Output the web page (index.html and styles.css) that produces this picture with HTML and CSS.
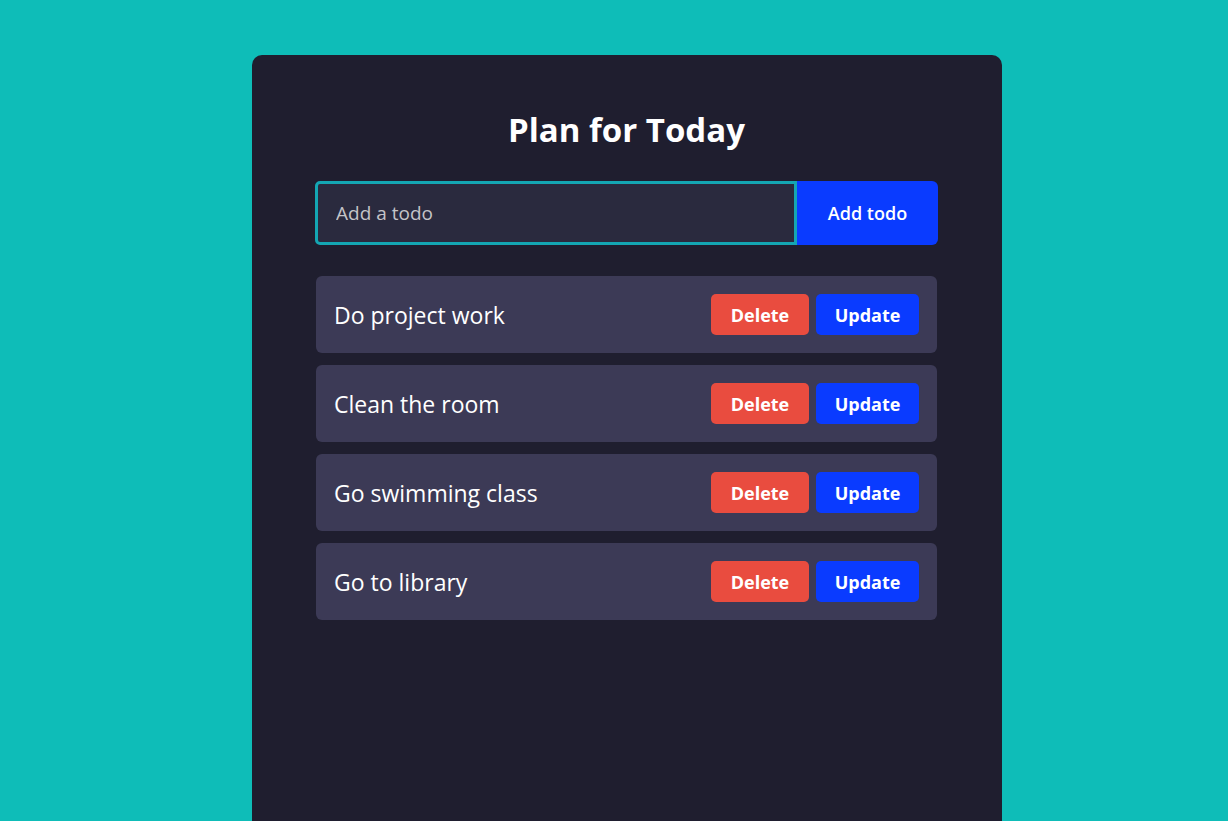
FILE: index.html
```html
<!DOCTYPE html>
<html lang="en">
<head>
<meta charset="utf-8">
<title>Plan for Today</title>
<link rel="stylesheet" href="styles.css">
</head>
<body>
<main class="page">
  <section class="card">
    <h1 class="title">Plan for Today</h1>
    <form class="todo-form">
      <input class="todo-input" type="text" placeholder="Add a todo">
      <button class="add-btn" type="button">Add todo</button>
    </form>
    <ul class="todo-list">
      <li class="todo-item">
        <span class="todo-text">Do project work</span>
        <div class="actions">
          <button class="btn btn-delete" type="button">Delete</button>
          <button class="btn btn-update" type="button">Update</button>
        </div>
      </li>
      <li class="todo-item">
        <span class="todo-text">Clean the room</span>
        <div class="actions">
          <button class="btn btn-delete" type="button">Delete</button>
          <button class="btn btn-update" type="button">Update</button>
        </div>
      </li>
      <li class="todo-item">
        <span class="todo-text">Go swimming class</span>
        <div class="actions">
          <button class="btn btn-delete" type="button">Delete</button>
          <button class="btn btn-update" type="button">Update</button>
        </div>
      </li>
      <li class="todo-item">
        <span class="todo-text">Go to library</span>
        <div class="actions">
          <button class="btn btn-delete" type="button">Delete</button>
          <button class="btn btn-update" type="button">Update</button>
        </div>
      </li>
    </ul>
  </section>
</main>
</body>
</html>
```
FILE: styles.css
```css
* { box-sizing: border-box; }
html, body { height: 100%; }
body {
  margin: 0;
  background: #0ebdb8;
  font-family: "Open Sans", "DejaVu Sans", sans-serif;
  overflow: hidden;
}
.page {
  display: flex;
  justify-content: center;
  padding-top: 55px;
  padding-left: 26px;
}
.card {
  width: 750px;
  min-height: 900px;
  background: #1f1e2f;
  border-radius: 10px;
  padding: 49px 64px 40px 63px;
}
.title {
  margin: 0 0 25px;
  text-align: center;
  color: #ffffff;
  font-size: 33px;
  font-weight: 700;
  line-height: 52px;
}
.todo-form {
  display: flex;
  height: 64px;
  margin: 0 0 31px;
}
.todo-input {
  flex: 1;
  min-width: 0;
  height: 64px;
  background: #2a2a3e;
  border: 3px solid #14a6b3;
  border-radius: 5px 0 0 5px;
  padding: 0 18px;
  font-family: inherit;
  font-size: 19px;
  color: #ffffff;
  outline: none;
}
.todo-input::placeholder { color: #c4c4c8; }
.add-btn {
  width: 141px;
  height: 64px;
  border: none;
  background: #0a3bff;
  color: #ffffff;
  border-radius: 0 6px 6px 0;
  font-family: inherit;
  font-size: 18px;
  font-weight: 600;
}
.todo-list {
  list-style: none;
  margin: 0;
  padding: 0;
  display: flex;
  flex-direction: column;
  gap: 12px;
}
.todo-item {
  display: flex;
  align-items: center;
  justify-content: space-between;
  height: 77px;
  padding: 0 18px;
  background: #3c3a56;
  border-radius: 6px;
  margin-right: 1px;
  margin-left: 1px;
}
.todo-text {
  color: #ffffff;
  font-size: 23px;
}
.actions {
  display: flex;
  gap: 7px;
}
.btn {
  height: 41px;
  border: none;
  border-radius: 5px;
  color: #ffffff;
  font-family: inherit;
  font-size: 18px;
  font-weight: 700;
}
.btn-delete { width: 98px; background: #e94c3f; }
.btn-update { width: 103px; background: #0a3bff; }
```
